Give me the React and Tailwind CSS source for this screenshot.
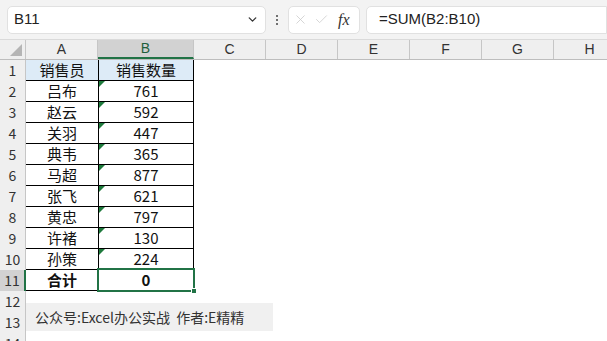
import { ChevronDown, X, Check } from 'lucide-react'

const cols = [
  { key: 'A', w: 'w-[72px]' },
  { key: 'B', w: 'w-[96px]' },
  { key: 'C', w: 'w-[72px]' },
  { key: 'D', w: 'w-[72px]' },
  { key: 'E', w: 'w-[72px]' },
  { key: 'F', w: 'w-[72px]' },
  { key: 'G', w: 'w-[72px]' },
  { key: 'H', w: 'w-[72px]' },
]

const data = [
  ['吕布', '761'],
  ['赵云', '592'],
  ['关羽', '447'],
  ['典韦', '365'],
  ['马超', '877'],
  ['张飞', '621'],
  ['黄忠', '797'],
  ['许褚', '130'],
  ['孙策', '224'],
]

const font = { fontFamily: '"Noto Sans CJK SC", "Noto Sans", sans-serif' }

function RowHead({ n, active }) {
  return (
    <div
      className={`w-[26px] shrink-0 h-full flex items-center justify-center text-[14px] text-[#333] border-r ${
        active ? 'bg-[#d2d2d2] border-[#217346] border-r-2' : 'bg-[#efefef] border-[#c6c6c6]'
      }`}
    >
      {n}
    </div>
  )
}

export default function App() {
  return (
    <div className="w-[607px] h-[341px] overflow-hidden bg-white relative" style={font}>
      {/* Formula bar */}
      <div className="h-[39px] bg-[#f3f3f3] flex items-center pl-[7px] gap-0">
        <div className="w-[259px] h-[28px] bg-white border border-[#e1e1e1] rounded-[5px] flex items-center justify-between pl-[6px] pr-[6px]">
          <span className="text-[15px] text-[#222]" style={{ fontFamily: '"Liberation Sans", sans-serif' }}>B11</span>
          <ChevronDown size={13} strokeWidth={2.4} className="text-[#333]" />
        </div>
        <div className="w-[22px] flex flex-col items-center gap-[2px]">
          <span className="w-[2px] h-[2px] bg-[#444] rounded-full" />
          <span className="w-[2px] h-[2px] bg-[#444] rounded-full" />
          <span className="w-[2px] h-[2px] bg-[#444] rounded-full" />
        </div>
        <div className="w-[72px] h-[28px] bg-white border border-[#e1e1e1] rounded-[5px] flex items-center pl-[4px] gap-[6px]">
          <X size={15} strokeWidth={1.2} className="text-[#c8c8c8]" />
          <Check size={15} strokeWidth={1.2} className="text-[#c8c8c8]" />
          <span className="italic text-[16px] text-[#333] ml-[3px]" style={{ fontFamily: '"Liberation Serif", serif' }}>fx</span>
        </div>
        <div className="ml-[6px] flex-1 h-[28px] bg-white border border-[#e1e1e1] rounded-l-[5px] flex items-center pl-[12px]">
          <span className="text-[15px] text-[#222]" style={{ fontFamily: '"Liberation Sans", sans-serif' }}>=SUM(B2:B10)</span>
        </div>
      </div>

      {/* Column headers */}
      <div className="h-[21px] flex bg-[#efefef] border-t border-[#dadada] border-b border-b-[#bdbdbd]">
        <div className="w-[26px] shrink-0 border-r border-[#c6c6c6] relative">
          <div
            className="absolute right-[3px] bottom-[3px] w-0 h-0 border-l-[12px] border-l-transparent border-b-[12px] border-b-[#b5b5b5]"
          />
        </div>
        {cols.map((c) => (
          <div
            key={c.key}
            className={`${c.w} shrink-0 flex items-center justify-center text-[14px] ${
              c.key === 'B'
                ? 'bg-[#d2d2d2] text-[#1f5f3c] border-b-2 border-[#217346] border-r border-r-[#c6c6c6]'
                : 'text-[#333] border-r border-[#c6c6c6]'
            }`}
            style={{ fontFamily: '"Liberation Sans", sans-serif' }}
          >
            {c.key}
          </div>
        ))}
      </div>

      {/* Row 1 */}
      <div className="h-[21px] flex">
        <RowHead n={1} />
        <div className="w-[72px] shrink-0 bg-[#ddebf7] border-b border-black flex items-center justify-center text-[15px] text-[#111]">销售员</div>
        <div className="w-[96px] shrink-0 bg-[#ddebf7] border-l border-r border-b border-black flex items-center justify-center text-[15px] text-[#111]">销售数量</div>
      </div>

      {data.map((r, i) => (
        <div key={i} className="h-[21px] flex">
          <RowHead n={i + 2} />
          <div className="w-[72px] shrink-0 border-b border-black flex items-center justify-center text-[15px] text-[#111]">{r[0]}</div>
          <div className="w-[96px] shrink-0 border-l border-r border-b border-black flex items-center justify-center text-[15px] text-[#111] relative">
            <span className="absolute left-0 top-0 w-0 h-0 border-t-[6px] border-t-[#1e7a3c] border-r-[6px] border-r-transparent" />
            {r[1]}
          </div>
        </div>
      ))}

      {/* Row 11 */}
      <div className="h-[21px] flex">
        <RowHead n={11} active />
        <div className="w-[72px] shrink-0 border-b border-black flex items-center justify-center text-[15px] font-bold text-[#111]">合计</div>
        <div className="w-[96px] shrink-0 border-l border-r border-b border-black flex items-center justify-center text-[15px] font-bold text-[#111] relative">
          0
          <div className="absolute -left-[2px] -top-[2px] -right-[2px] -bottom-[2px] border-2 border-[#217346]" />
          <div className="absolute -right-[4px] -bottom-[4px] w-[6px] h-[6px] bg-[#217346] border border-white" />
        </div>
      </div>

      {[12, 13, 14].map((n) => (
        <div key={n} className="h-[21px] flex">
          <RowHead n={n} />
        </div>
      ))}

      {/* Text box */}
      <div className="absolute left-[26px] top-[303px] w-[247px] h-[28px] bg-[#f0f0f0] flex items-center pl-[9px] text-[14px] text-[#333]">
        公众号:Excel办公实战&nbsp;&nbsp;作者:E精精
      </div>
    </div>
  )
}
